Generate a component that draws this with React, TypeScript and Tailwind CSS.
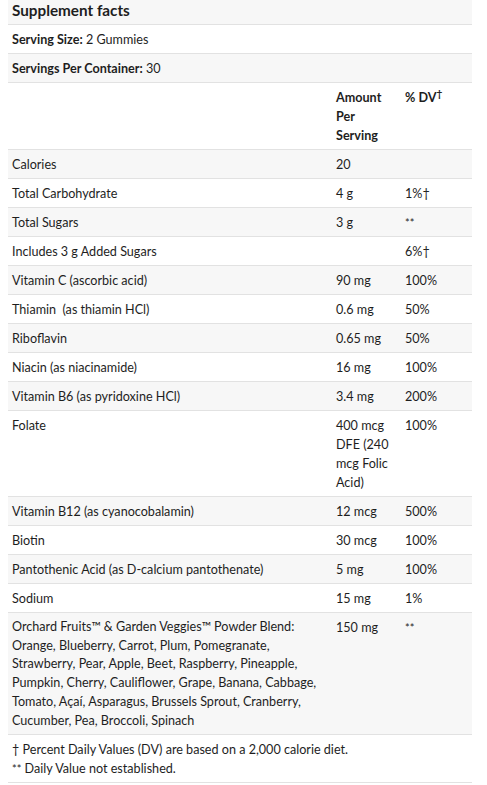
interface Row {
  label: string;
  amount?: string;
  dv?: string;
}

const rows: Row[] = [
  { label: 'Calories', amount: '20' },
  { label: 'Total Carbohydrate', amount: '4 g', dv: '1%†' },
  { label: 'Total Sugars', amount: '3 g', dv: '**' },
  { label: 'Includes 3 g Added Sugars', dv: '6%†' },
  { label: 'Vitamin C (ascorbic acid)', amount: '90 mg', dv: '100%' },
  { label: 'Thiamin\u00a0 (as thiamin HCl)', amount: '0.6 mg', dv: '50%' },
  { label: 'Riboflavin', amount: '0.65 mg', dv: '50%' },
  { label: 'Niacin (as niacinamide)', amount: '16 mg', dv: '100%' },
  { label: 'Vitamin B6 (as pyridoxine HCl)', amount: '3.4 mg', dv: '200%' },
  { label: 'Folate', amount: '400 mcg DFE (240 mcg Folic Acid)', dv: '100%' },
  { label: 'Vitamin B12 (as cyanocobalamin)', amount: '12 mcg', dv: '500%' },
  { label: 'Biotin', amount: '30 mcg', dv: '100%' },
  { label: 'Pantothenic Acid (as D-calcium pantothenate)', amount: '5 mg', dv: '100%' },
  { label: 'Sodium', amount: '15 mg', dv: '1%' },
  {
    label:
      'Orchard Fruits™ & Garden Veggies™ Powder Blend: Orange, Blueberry, Carrot, Plum, Pomegranate, Strawberry, Pear, Apple, Beet, Raspberry, Pineapple, Pumpkin, Cherry, Cauliflower, Grape, Banana, Cabbage, Tomato, Açaí, Asparagus, Brussels Sprout, Cranberry, Cucumber, Pea, Broccoli, Spinach',
    amount: '150 mg',
    dv: '**',
  },
];

const cell = 'px-1 pt-[5px] pb-[4px]';

export default function App() {
  return (
    <div className="min-h-screen bg-white font-['Lato',sans-serif] text-[12.6px] leading-[19px] text-[#1e1e1e]">
      <div className="ml-2 w-[464px]">
        {/* Title */}
        <div className="bg-[#f7f7f7] border-b border-[#e2e2e2] px-1 pb-[4px] text-[15.25px] leading-[20px] font-bold">
          Supplement facts
        </div>

        <div className={`${cell} border-b border-[#e2e2e2]`}>
          <span className="font-bold">Serving Size:</span> 2 Gummies
        </div>
        <div className={`${cell} bg-[#f7f7f7] border-b border-[#e2e2e2]`}>
          <span className="font-bold">Servings Per Container:</span> 30
        </div>

        {/* Column header */}
        <div className="grid grid-cols-[324px_69px_71px] border-b border-[#e2e2e2]">
          <div className={cell} />
          <div className={`${cell} font-bold`}>Amount Per Serving</div>
          <div className={`${cell} font-bold`}>
            % DV<sup className="text-[10px]">†</sup>
          </div>
        </div>

        {rows.map((r, i) => (
          <div
            key={i}
            className={`grid grid-cols-[324px_69px_71px] border-b border-[#e2e2e2] ${i % 2 === 0 ? 'bg-[#f7f7f7]' : 'bg-white'}`}
          >
            <div className={`${cell} ${i === rows.length - 1 ? 'leading-[18.7px]' : ''}`}>{r.label}</div>
            <div className={cell}>{r.amount}</div>
            <div className={cell}>
              {r.dv === '**' ? <span className="text-[11px] align-top">**</span> : r.dv}
            </div>
          </div>
        ))}

        {/* Footnotes */}
        <div className={`${cell} border-b border-[#e2e2e2]`}>
          <div>† Percent Daily Values (DV) are based on a 2,000 calorie diet.</div>
          <div>
            <span className="text-[11px] align-top">**</span> Daily Value not established.
          </div>
        </div>
      </div>
    </div>
  );
}
